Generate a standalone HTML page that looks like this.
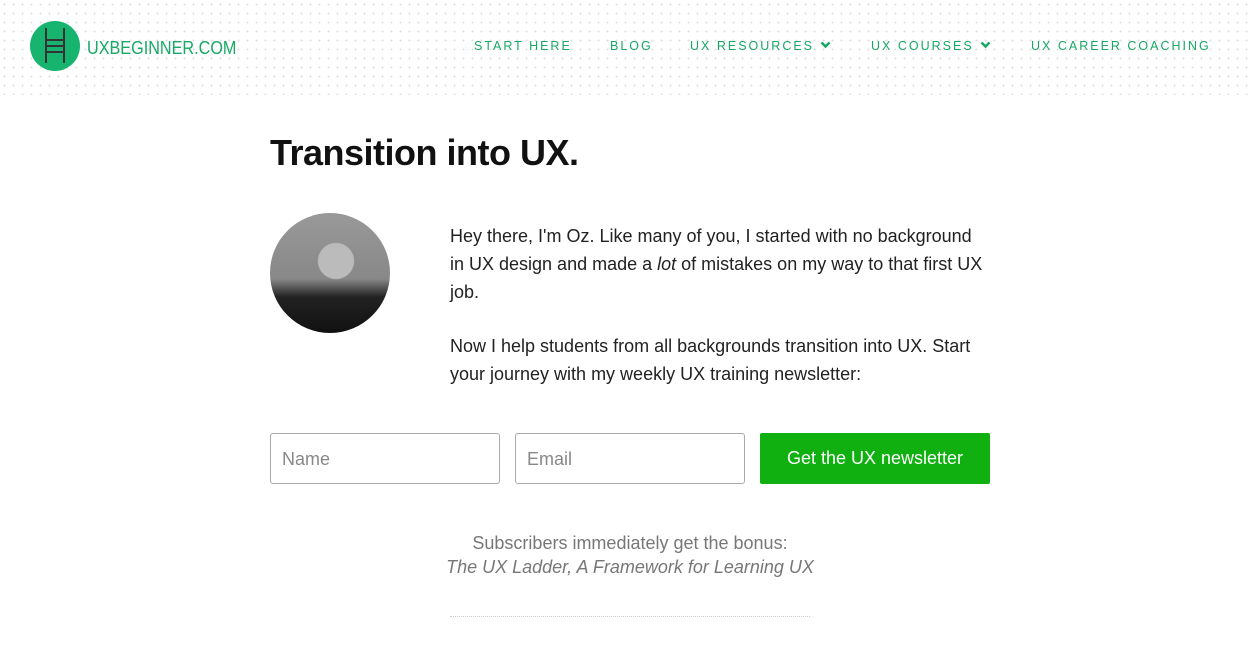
<!DOCTYPE html>
<html><head><meta charset="utf-8"><style>
body{margin:0;width:1250px;height:650px;background:#fff;font-family:"Liberation Sans",sans-serif;position:relative;overflow:hidden}
.hdr{position:absolute;left:0;top:0;width:1250px;height:95px;background-image:radial-gradient(#ddd 0.8px,transparent 1px);background-size:9px 9px}
.logo{position:absolute;left:30px;top:21px;width:50px;height:50px;border-radius:50%;background:#16b46e}
.ladder{position:absolute;left:15px;top:7px;width:20px;height:35px;border-left:2px solid #333;border-right:2px solid #333;box-sizing:border-box}
.ladder i{position:absolute;left:0;right:0;height:2px;background:#333}
.brand{position:absolute;left:87px;top:38px;font-size:18px;color:#16a865;transform:scaleX(0.9);transform-origin:left}
.nav{position:absolute;top:39px;font-size:12.5px;letter-spacing:2px;color:#16a865}
.nav svg{vertical-align:1px;margin-left:6px}
h1{position:absolute;left:270px;top:132px;margin:0;font-size:36px;font-weight:bold;letter-spacing:-0.5px;color:#111}
.photo{position:absolute;left:270px;top:213px;width:120px;height:120px;border-radius:50%;background:radial-gradient(circle at 55% 40%,#bbb 0 18%,transparent 19%),linear-gradient(180deg,#999 0,#888 55%,#222 70%,#111 100%)}
.p{position:absolute;left:450px;font-size:18px;line-height:28px;color:#222;width:580px}
.in{position:absolute;top:433px;width:230px;height:51px;border:1px solid #aaa;border-radius:3px;box-sizing:border-box;font-size:18px;color:#888;padding:15px 11px}
.btn{position:absolute;left:760px;top:433px;width:230px;height:51px;background:#0fb00f;border-radius:2px;color:#fff;font-size:18px;text-align:center;line-height:51px}
.sub{position:absolute;left:270px;width:720px;text-align:center;font-size:18px;color:#777}
</style></head><body>
<div class="hdr"></div>
<div class="logo"><div class="ladder"><i style="top:11px"></i><i style="top:17px"></i><i style="top:23px"></i></div></div>
<div class="brand">UXBEGINNER.COM</div>
<div class="nav" style="left:474px">START HERE</div>
<div class="nav" style="left:610px">BLOG</div>
<div class="nav" style="left:690px">UX RESOURCES<svg width="11" height="8" viewBox="0 0 11 8"><path d="M1.5 1.5l4 4 4-4" stroke="#16a865" stroke-width="2.5" fill="none"/></svg></div>
<div class="nav" style="left:871px">UX COURSES<svg width="11" height="8" viewBox="0 0 11 8"><path d="M1.5 1.5l4 4 4-4" stroke="#16a865" stroke-width="2.5" fill="none"/></svg></div>
<div class="nav" style="left:1031px">UX CAREER COACHING</div>
<h1>Transition into UX.</h1>
<div class="photo"></div>
<div class="p" style="top:222px">Hey there, I'm Oz. Like many of you, I started with no background<br>in UX design and made a <i>lot</i> of mistakes on my way to that first UX<br>job.</div>
<div class="p" style="top:332px">Now I help students from all backgrounds transition into UX. Start<br>your journey with my weekly UX training newsletter:</div>
<div class="in" style="left:270px">Name</div>
<div class="in" style="left:515px">Email</div>
<div class="btn">Get the UX newsletter</div>
<div class="sub" style="top:533px">Subscribers immediately get the bonus:</div>
<div class="sub" style="top:557px"><i>The UX Ladder, A Framework for Learning UX</i></div>
<div style="position:absolute;left:450px;top:616px;width:360px;border-top:1px dotted #ccc"></div>
</body></html>
